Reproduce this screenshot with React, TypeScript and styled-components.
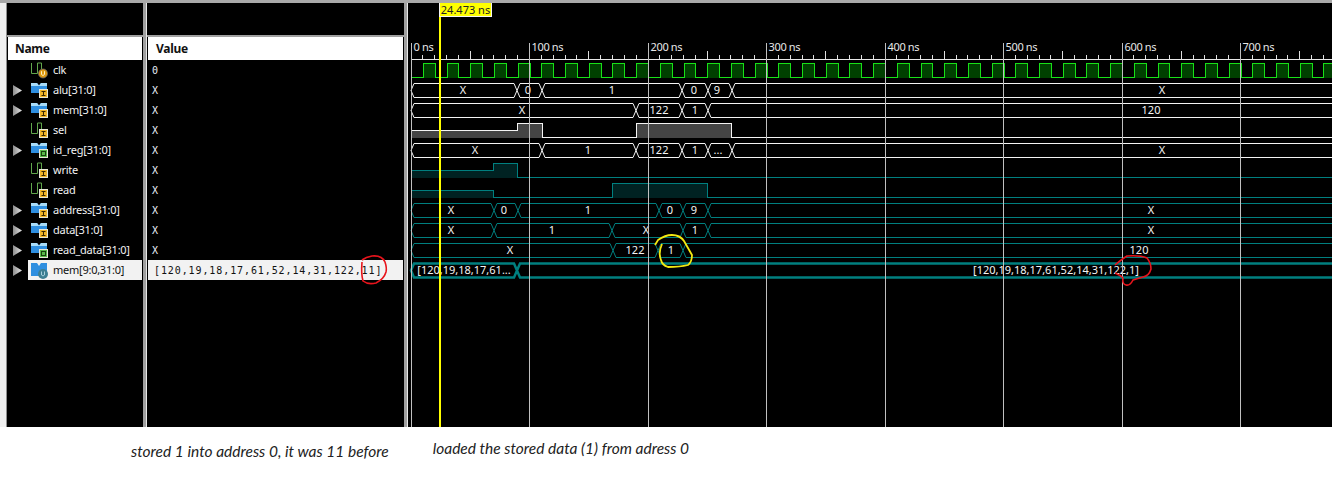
import styled, { createGlobalStyle } from 'styled-components';

type Badge = 'U' | 'I' | 'O';
type Kind = 'scalar' | 'bus' | 'array';

type Signal = {
  name: string;
  value: string;
  kind: Kind;
  badge: Badge;
  selected?: boolean;
};

type BusRow = {
  row: number;
  edges: number[];
  labels: [string, number][];
  color: string;
  thick?: boolean;
};

const SIGNALS: Signal[] = [
  { name: 'clk', value: '0', kind: 'scalar', badge: 'U' },
  { name: 'alu[31:0]', value: 'X', kind: 'bus', badge: 'I' },
  { name: 'mem[31:0]', value: 'X', kind: 'bus', badge: 'I' },
  { name: 'sel', value: 'X', kind: 'scalar', badge: 'I' },
  { name: 'id_reg[31:0]', value: 'X', kind: 'bus', badge: 'O' },
  { name: 'write', value: 'X', kind: 'scalar', badge: 'I' },
  { name: 'read', value: 'X', kind: 'scalar', badge: 'I' },
  { name: 'address[31:0]', value: 'X', kind: 'bus', badge: 'I' },
  { name: 'data[31:0]', value: 'X', kind: 'bus', badge: 'I' },
  { name: 'read_data[31:0]', value: 'X', kind: 'bus', badge: 'O' },
  { name: 'mem[9:0,31:0]', value: '[120,19,18,17,61,52,14,31,122,11]', kind: 'array', badge: 'U', selected: true },
];

const WHITE = '#f4f4f4';
const TEAL = '#007f7f';

const BUSES: BusRow[] = [
  { row: 1, edges: [517, 542, 682, 708, 732], labels: [['X', 463], ['0', 528], ['1', 612], ['0', 694], ['9', 717], ['X', 1162]], color: WHITE },
  { row: 2, edges: [636, 682, 708], labels: [['X', 522], ['122', 659], ['1', 695], ['120', 1151]], color: WHITE },
  { row: 4, edges: [542, 636, 682, 708, 732], labels: [['X', 475], ['1', 588], ['122', 659], ['1', 695], ['...', 718], ['X', 1162]], color: WHITE },
  { row: 7, edges: [494, 518, 659, 683, 708], labels: [['X', 451], ['0', 504], ['1', 588], ['0', 670], ['9', 694], ['X', 1151]], color: TEAL },
  { row: 8, edges: [494, 612, 683, 708], labels: [['X', 451], ['1', 552], ['X', 646], ['1', 695], ['X', 1151]], color: TEAL },
  { row: 9, edges: [613, 658, 683], labels: [['X', 510], ['122', 635], ['1', 671], ['120', 1139]], color: TEAL },
  { row: 10, edges: [517], labels: [['[120,19,18,17,61...', 464], ['[120,19,18,17,61,52,14,31,122,1]', 1056]], color: TEAL, thick: true },
];

const START = 411;
const END = 1340;
const NS100 = 118.5;
const rowY = (row: number) => 70.5 + row * 20;

const GlobalStyle = createGlobalStyle`
  html, body {
    margin: 0;
    padding: 0;
    background: #fff;
  }
`;

const Page = styled.div`
  position: relative;
  width: 1332px;
  height: 480px;
  overflow: hidden;
  background: #fff;
`;

const Simulator = styled.div`
  display: flex;
  height: 424px;
  background: #000;
  border-top: 3px solid #a9a9a9;
`;

const Gutter = styled.div`
  width: 6px;
  background: #f0f0f0;
  border-right: 1px solid #8f8f8f;
`;

const Column = styled.div<{ $width: number }>`
  width: ${(p) => p.$width}px;
  background: #000;
`;

const Sash = styled.div`
  width: 4px;
  background: #a0a0a0;
  border-right: 1px solid #e8e8e8;
  box-sizing: border-box;
`;

const HeaderGap = styled.div`
  height: 32px;
  border-bottom: 2px solid #a0a0a0;
`;

const Header = styled.div<{ $pad: number }>`
  height: 23px;
  margin: 0 1px;
  padding-left: ${(p) => p.$pad}px;
  background: #fff;
  color: #111;
  font: bold 12px/24px 'Noto Sans', sans-serif;
  letter-spacing: -0.3px;
`;

const NameRow = styled.div`
  display: flex;
  height: 20px;
  margin-right: 1px;
`;

const ExpanderSlot = styled.div`
  display: flex;
  flex: 0 0 21px;
  align-items: center;
  padding-left: 6px;
  box-sizing: border-box;
`;

const NameCell = styled.div<{ $selected?: boolean }>`
  display: flex;
  flex: 1;
  align-items: center;
  padding-left: 3px;
  background: ${(p) => (p.$selected ? '#f2f2f2' : 'transparent')};
  color: ${(p) => (p.$selected ? '#111' : '#f2f2f2')};
  font: 11px/20px 'Noto Sans', sans-serif;
  letter-spacing: -0.25px;
`;

const NameText = styled.span`
  margin-left: 5px;
  white-space: nowrap;
`;

const ValueRow = styled.div<{ $selected?: boolean }>`
  height: 20px;
  margin: 0 1px;
  padding-left: ${(p) => (p.$selected ? 6 : 4)}px;
  background: ${(p) => (p.$selected ? '#f2f2f2' : 'transparent')};
  color: ${(p) => (p.$selected ? '#111' : '#e8eef8')};
  font: 10px/21px 'DejaVu Sans Mono', monospace;
  letter-spacing: 0.9px;
  white-space: nowrap;
`;

const WaveView = styled.div`
  position: relative;
  flex: 1;
  overflow: hidden;
`;

const WaveCanvas = styled.svg`
  display: block;
  width: 924px;
  height: 424px;
  font-family: 'Noto Sans', sans-serif;
  font-size: 11px;
`;

const RulerLabel = styled.text`
  letter-spacing: -0.35px;
`;

const CursorLabel = styled.div`
  position: absolute;
  top: 0;
  left: 31px;
  width: 53px;
  height: 14px;
  background: #ffff00;
  border: 1px solid #f4f4f4;
  border-width: 0 1px 1px 1px;
  box-sizing: border-box;
  color: #222;
  font: 11px/14px 'Noto Sans', sans-serif;
  text-align: center;
  white-space: nowrap;
`;

const Captions = styled.div`
  display: flex;
  height: 53px;
  color: #222;
  font: italic 15.5px 'Lato', sans-serif;
`;

const Caption = styled.span<{ $left: number; $top: number }>`
  margin-left: ${(p) => p.$left}px;
  padding-top: ${(p) => p.$top}px;
  white-space: nowrap;
`;

const Scribbles = styled.svg`
  position: absolute;
  top: 0;
  left: 0;
  width: 1332px;
  height: 480px;
  pointer-events: none;
`;

function Expander() {
  return (
    <svg width="9" height="11" viewBox="0 0 9 11">
      <defs>
        <linearGradient id="tri" x1="0" x2="1">
          <stop offset="0" stopColor="#8c8c8c" />
          <stop offset="1" stopColor="#e8e8e8" />
        </linearGradient>
      </defs>
      <path d="M0 0 L9 5.5 L0 11 Z" fill="url(#tri)" />
    </svg>
  );
}

function BadgeMark({ badge, round }: { badge: Badge; round?: boolean }) {
  if (badge === 'U' && round) {
    return (
      <g>
        <circle cx="12" cy="13" r="5" fill="#3d7f92" />
        <path d="M10.5 10.5 V14 Q12 16 13.5 14 V10.5" fill="none" stroke="#a8d0dc" />
      </g>
    );
  }
  if (badge === 'U') {
    return (
      <g>
        <circle cx="12" cy="12.5" r="4.5" fill="#e09a10" stroke="#666" strokeWidth="0.8" />
        <path d="M10.5 10.2 V13.5 Q12 15.5 13.5 13.5 V10.2" fill="none" stroke="#fff2c0" />
      </g>
    );
  }
  const isOut = badge === 'O';
  return (
    <g>
      <rect x="8.5" y="8.5" width="8" height="8" fill={isOut ? '#58b848' : '#f0b428'} stroke="#e8e8d8" />
      {isOut ? (
        <rect x="10.5" y="10.5" width="4" height="4" fill="none" stroke="#14400c" />
      ) : (
        <path d="M10.5 10.5 H14.5 M12.5 10.5 V14.5 M10.5 14.5 H14.5" stroke="#3a2800" fill="none" />
      )}
    </g>
  );
}

function SignalIcon({ kind, badge }: { kind: Kind; badge: Badge }) {
  return (
    <svg width="17" height="18" viewBox="0 0 17 18">
      {kind === 'scalar' && <path d="M0.5 2 V12.5 H6.5 V2 H10.5 V8" fill="none" stroke="#62a84c" />}
      {kind === 'bus' && (
        <g>
          <path d="M0 2 H6 L8 4.5 L10 2 H16 V12 H0 Z" fill="#2f8fe0" />
          <path d="M0 2 H6 L8 4.5 L10 2 H16 V5 H0 Z" fill="#a8dcf8" />
        </g>
      )}
      {kind === 'array' && <path d="M0 2 H6 L8 5 L10 2 H16 V15 H0 Z" fill="#2f8fe0" />}
      <BadgeMark badge={badge} round={kind === 'array'} />
    </svg>
  );
}

function Ruler() {
  const ticks = [];
  for (let i = 1; i * (NS100 / 10) + START < END; i++) {
    if (i % 10 === 0) continue;
    const x = Math.floor(START + (i * NS100) / 10) + 0.5;
    ticks.push(<line key={i} x1={x} x2={x} y1={i % 10 === 5 ? 51 : 55} y2={59} stroke="#e0e0e0" />);
  }
  return (
    <g>
      <line x1={START} x2={END} y1={59.5} y2={59.5} stroke="#e8e8e8" />
      {ticks}
      {[0, 1, 2, 3, 4, 5, 6, 7].map((n) => (
        <RulerLabel key={n} x={Math.floor(START + n * NS100) + 2.5} y={51} fill="#e8e8e8">
          {n * 100} ns
        </RulerLabel>
      ))}
    </g>
  );
}

function GridLines() {
  return (
    <g>
      {[0, 1, 2, 3, 4, 5, 6, 7].map((n) => {
        const x = Math.floor(START + n * NS100) + 0.5;
        return <line key={n} x1={x} x2={x} y1={43} y2={427} stroke="#c0c0c0" />;
      })}
    </g>
  );
}

function ClockWave() {
  const high = 63.5;
  const low = 77.5;
  const half = NS100 / 10;
  let line = `M${START} ${low}`;
  const fills = [];
  for (let i = 0; START + (2 * i + 1) * half < END; i++) {
    const rise = Math.round(START + (2 * i + 1) * half) + 0.5;
    const fall = Math.round(START + (2 * i + 2) * half) + 0.5;
    line += ` H${rise} V${high} H${fall} V${low}`;
    fills.push(<rect key={i} x={rise} y={high} width={fall - rise} height={low - high} fill="#004000" />);
  }
  return (
    <g shapeRendering="crispEdges">
      {fills}
      <path d={line} fill="none" stroke="#18e018" />
    </g>
  );
}

function BitWave({ row, path, fill, stroke, fillColor }: { row: number; path: string; fill: string; stroke: string; fillColor: string }) {
  const cy = rowY(row);
  return (
    <g shapeRendering="crispEdges" transform={`translate(0 ${cy})`}>
      <path d={fill} fill={fillColor} />
      <path d={path} fill="none" stroke={stroke} />
    </g>
  );
}

function BusWave({ bus }: { bus: BusRow }) {
  const cy = rowY(bus.row);
  const top = cy - 7;
  const bottom = cy + 7;
  const points = [START, ...bus.edges, END];
  const hexes = points.slice(0, -1).map((a, i) => {
    const b = points[i + 1];
    return `M${a} ${cy} L${a + 3} ${top} H${b - 3} L${b} ${cy} L${b - 3} ${bottom} H${a + 3} Z`;
  });
  return (
    <g>
      <path d={hexes.join(' ')} fill="none" stroke={bus.color} strokeWidth={bus.thick ? 2.5 : 1} />
      {bus.labels.map(([text, x]) => (
        <text key={`${text}-${x}`} x={x} y={cy + 3.5} fill="#f4f4f4" textAnchor="middle">
          {text}
        </text>
      ))}
    </g>
  );
}

export default function App() {
  return (
    <Page>
      <GlobalStyle />
      <Simulator>
        <Gutter />
        <Column $width={136}>
          <HeaderGap />
          <Header $pad={7}>Name</Header>
          {SIGNALS.map((s) => (
            <NameRow key={s.name}>
              <ExpanderSlot>{s.kind !== 'scalar' && <Expander />}</ExpanderSlot>
              <NameCell $selected={s.selected}>
                <SignalIcon kind={s.kind} badge={s.badge} />
                <NameText>{s.name}</NameText>
              </NameCell>
            </NameRow>
          ))}
        </Column>
        <Sash />
        <Column $width={257}>
          <HeaderGap />
          <Header $pad={8}>Value</Header>
          {SIGNALS.map((s) => (
            <ValueRow key={s.name} $selected={s.selected}>
              {s.value}
            </ValueRow>
          ))}
        </Column>
        <Sash />
        <WaveView>
          <WaveCanvas viewBox="408 3 924 424">
            <Ruler />
            <ClockWave />
            <BitWave
              row={3}
              path="M411 7 V0 M411 0 H517 V-7 H542 V7 H636 V-7 H731 V7 H1340"
              fill="M411 0 H517 V-7 H542 V7 H411 Z M636 -7 H731 V7 H636 Z"
              stroke={WHITE}
              fillColor="#444444"
            />
            <BitWave
              row={5}
              path="M411 0 H493 V-7 H517 V7 H1340"
              fill="M411 0 H493 V-7 H517 V7 H411 Z"
              stroke={TEAL}
              fillColor="#002222"
            />
            <BitWave
              row={6}
              path="M411 0 H493 V7 H612 V-7 H707 V7 H1340"
              fill="M411 0 H493 V7 H411 Z M612 -7 H707 V7 H612 Z"
              stroke={TEAL}
              fillColor="#002222"
            />
            {BUSES.map((bus) => (
              <BusWave key={bus.row} bus={bus} />
            ))}
            <GridLines />
            <line x1={440} x2={440} y1={17} y2={427} stroke="#ffff00" strokeWidth={2} />
          </WaveCanvas>
          <CursorLabel>24.473 ns</CursorLabel>
        </WaveView>
      </Simulator>
      <Captions>
        <Caption $left={131} $top={15}>stored 1 into address 0, it was 11 before</Caption>
        <Caption $left={44} $top={12}>loaded the stored data (1) from adress 0</Caption>
      </Captions>
      <Scribbles viewBox="0 0 1332 480">
        <path
          d="M362 260 Q366 257 372 256 Q382 255 385 262 Q387 268 386 272 Q384 279 376 283 Q368 285 363 281 Q361 274 362 262"
          fill="none"
          stroke="#e8141c"
          strokeWidth="1.6"
        />
        <path
          d="M1115 265 Q1122 259 1127 256 Q1140 255 1147 258 Q1151 263 1151 269 Q1149 276 1143 277 Q1136 279 1133 280 Q1130 286 1126 285 Q1122 284 1123 278 Q1120 275 1115 273"
          fill="none"
          stroke="#e8141c"
          strokeWidth="1.6"
        />
        <path
          d="M655 245 L658 240 Q665 235 672 235 Q680 235 684 241 Q688 248 692 255 Q692 262 688 265 Q680 267 668 267 Q662 265 661 260 Q658 253 662 244"
          fill="none"
          stroke="#f4e810"
          strokeWidth="1.8"
        />
      </Scribbles>
    </Page>
  );
}
